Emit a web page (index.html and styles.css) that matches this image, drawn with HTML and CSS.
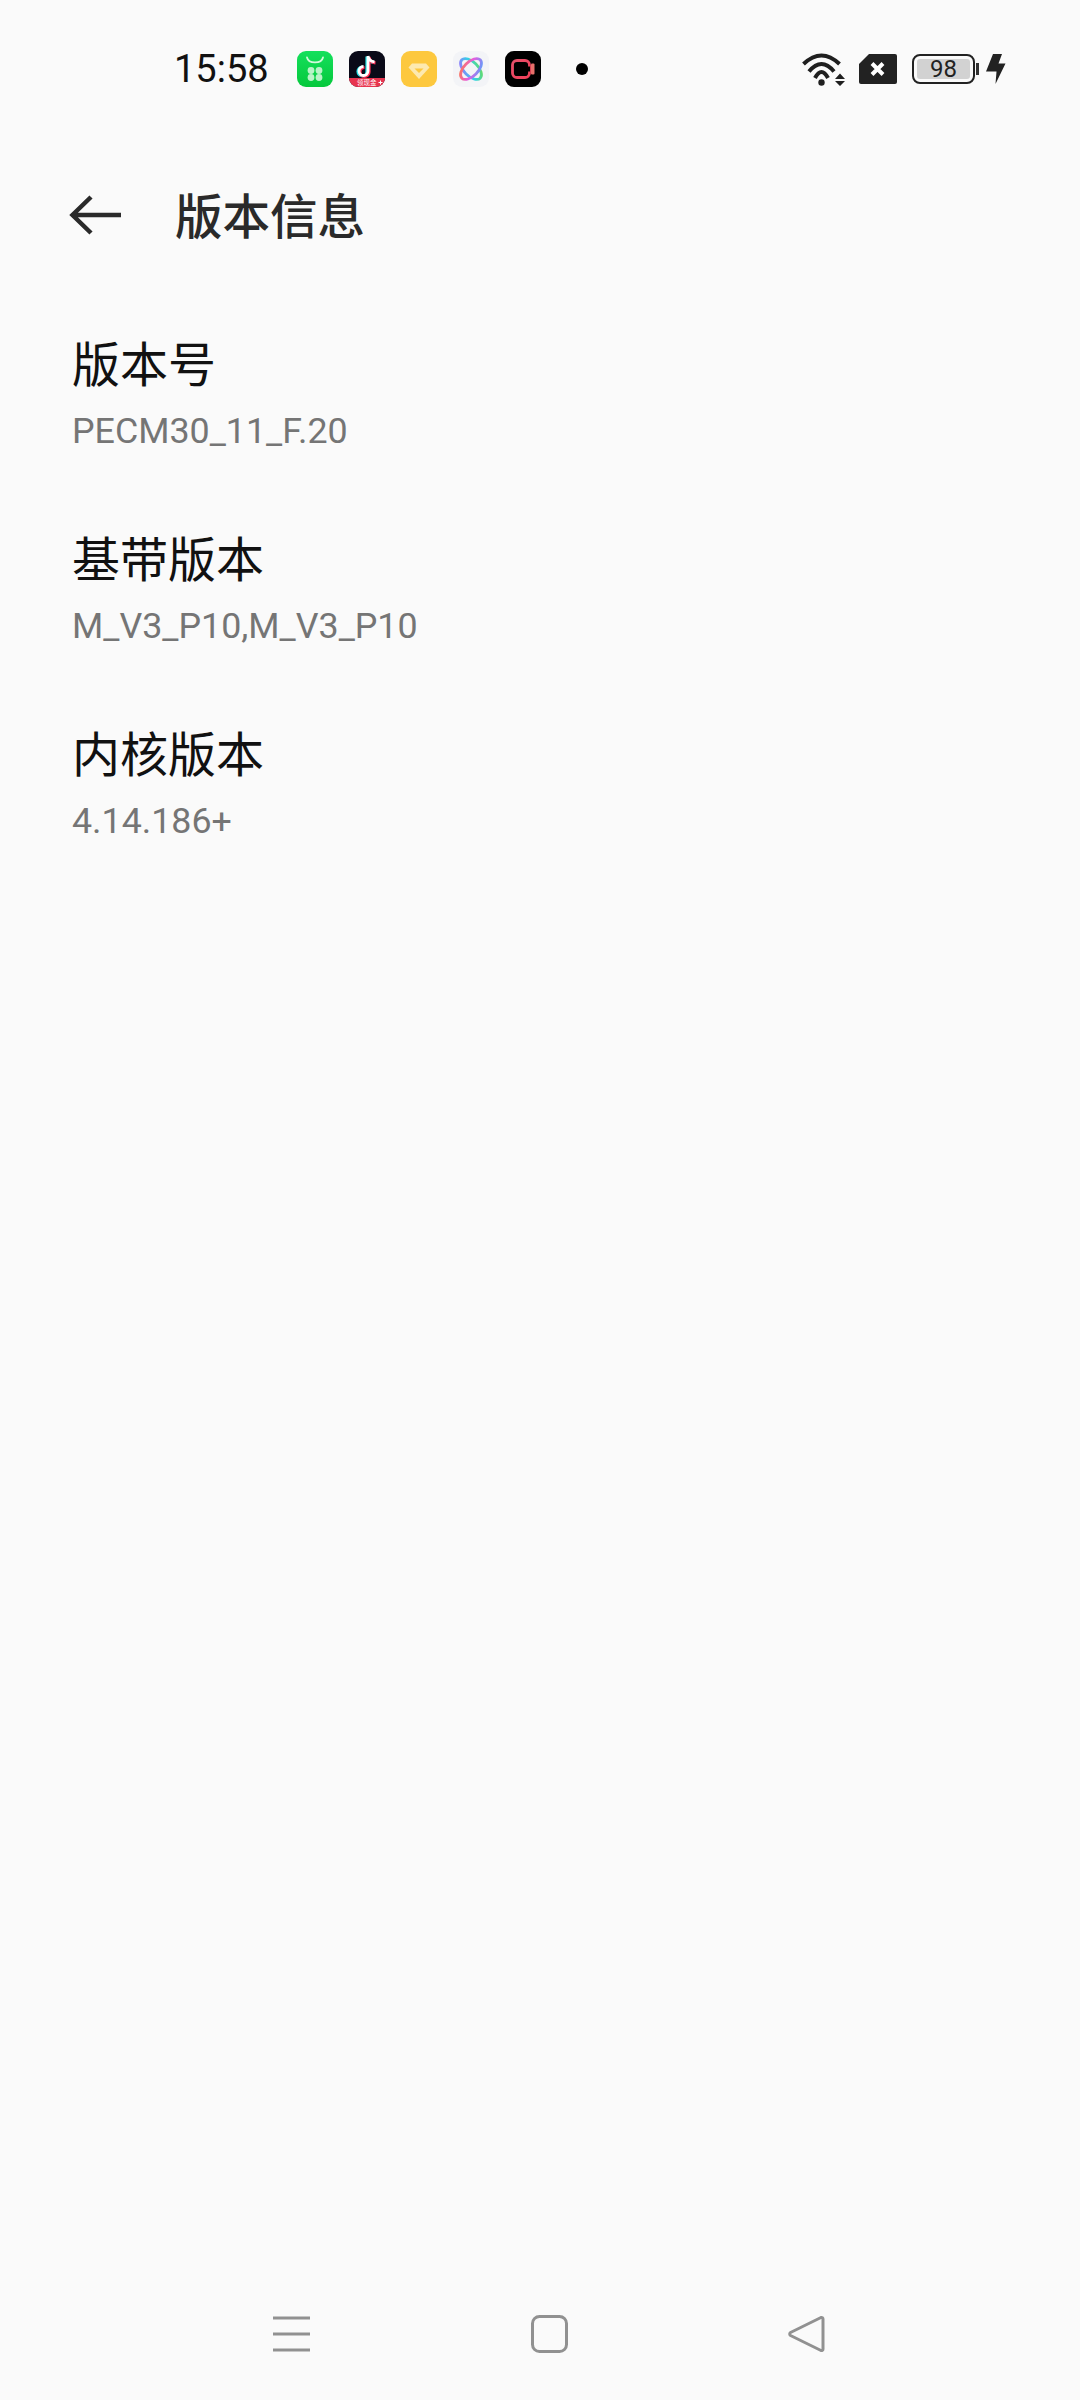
FILE: index.html
```html
<!DOCTYPE html>
<html>
<head>
    <title>版本信息</title>
    <meta charset="UTF-8">
    <meta name="viewport" content="width=device-width, initial-scale=1.0">
    <link rel="stylesheet" href="styles.css">
</head>
<body>
    <div class="status-bar">
        <span class="time">15:58</span>
        <div class="app-icons">
            <svg class="app-icon" viewBox="0 0 36 36">
                <defs>
                    <linearGradient id="storeGreen" x1="0" y1="0" x2="0" y2="1">
                        <stop offset="0" stop-color="#14e05c"/>
                        <stop offset="1" stop-color="#05c83c"/>
                    </linearGradient>
                </defs>
                <rect width="36" height="36" rx="9" fill="url(#storeGreen)"/>
                <path d="M10 6.500c1.500 6.500 14.500 6.500 16 0" fill="none" stroke="#d2f9dc" stroke-width="1.800" stroke-linecap="round"/>
                <circle cx="14" cy="19.500" r="3.400" fill="#b9f3c8"/>
                <circle cx="22" cy="19.500" r="3.400" fill="#b9f3c8"/>
                <circle cx="14" cy="26.500" r="3.400" fill="#b9f3c8"/>
                <circle cx="22" cy="26.500" r="3.400" fill="#b9f3c8"/>
            </svg>
            <svg class="app-icon" viewBox="0 0 36 36">
                <rect width="36" height="36" rx="9" fill="#0a0a18"/>
                <path d="M0 27h36a9 9 0 0 1-9 9H9a9 9 0 0 1-9-9z" fill="#e8344f"/>
                <path d="M19 5v15a4.500 4.500 0 1 1-4.500-4.500M19 5c.5 3.500 3 5.500 6.500 5.800" fill="none" stroke="#25e3e8" stroke-width="3.200" transform="translate(-1 .500)"/>
                <path d="M19 5v15a4.500 4.500 0 1 1-4.500-4.500M19 5c.5 3.500 3 5.500 6.500 5.800" fill="none" stroke="#ff2f55" stroke-width="3.200" transform="translate(1 1)"/>
                <path d="M19 5v15a4.500 4.500 0 1 1-4.500-4.500M19 5c.5 3.500 3 5.500 6.500 5.800" fill="none" stroke="#fff" stroke-width="2.800"/>
                <text x="8" y="34" class="badge-text">领现金</text>
                <path d="M31.500 29.500v4M29.500 31.500h4" stroke="#fff" stroke-width="1"/>
            </svg>
            <svg class="app-icon" viewBox="0 0 36 36">
                <rect width="36" height="36" rx="9" fill="#fdc83e"/>
                <path d="M7.500 16.500 11 12.500h14l3.500 4L18 28z" fill="#fde9b0"/>
                <path d="M13.500 17.500h9L18 22z" fill="#fdc83e"/>
            </svg>
            <svg class="app-icon" viewBox="0 0 36 36">
                <defs>
                    <linearGradient id="orbitA" x1="0" y1="0" x2="1" y2="1">
                        <stop offset="0" stop-color="#ff7a45"/>
                        <stop offset=".5" stop-color="#e55ce0"/>
                        <stop offset="1" stop-color="#4aa8ff"/>
                    </linearGradient>
                    <linearGradient id="orbitB" x1="1" y1="0" x2="0" y2="1">
                        <stop offset="0" stop-color="#6fdc50"/>
                        <stop offset=".5" stop-color="#2fd2e8"/>
                        <stop offset="1" stop-color="#a66cff"/>
                    </linearGradient>
                </defs>
                <rect width="36" height="36" rx="9" fill="#f3f4f7"/>
                <ellipse cx="18" cy="18" rx="13" ry="7" transform="rotate(45 18 18)" fill="none" stroke="url(#orbitB)" stroke-width="2.800"/>
                <ellipse cx="18" cy="18" rx="13" ry="7" transform="rotate(-45 18 18)" fill="none" stroke="url(#orbitA)" stroke-width="2.800"/>
            </svg>
            <svg class="app-icon" viewBox="0 0 36 36">
                <defs>
                    <linearGradient id="camRed" x1="0" y1="0" x2="1" y2="1">
                        <stop offset="0" stop-color="#e6506a"/>
                        <stop offset="1" stop-color="#f0405a"/>
                    </linearGradient>
                </defs>
                <rect width="36" height="36" rx="9" fill="#000"/>
                <rect x="7.500" y="9.500" width="17" height="17" rx="4.500" fill="none" stroke="url(#camRed)" stroke-width="2.800"/>
                <path d="M22 15.500h3v5h-3z" fill="#000"/>
                <rect x="26" y="12.500" width="3.500" height="11" rx="1" fill="#e8706a"/>
            </svg>
            <span class="dot"></span>
        </div>
        <div class="system-icons">
            <svg class="wifi" viewBox="0 0 43 33">
                <path d="M1.500 11Q19.500-6 37.500 11" fill="none" stroke="#1f1f1f" stroke-width="4"/>
                <path d="M7 18.500Q19.500 3.500 32 18.500" fill="none" stroke="#1f1f1f" stroke-width="4"/>
                <path d="M13 25Q19.500 13 26 25" fill="none" stroke="#1f1f1f" stroke-width="4"/>
                <circle cx="19.500" cy="29.500" r="3.200" fill="#1f1f1f"/>
                <path d="M33 26l5-5.500 5 5.500zM33 28h10l-5 5z" fill="#1f1f1f"/>
            </svg>
            <svg class="sim" viewBox="0 0 38 30">
                <path d="M10 0h26a2 2 0 0 1 2 2v26a2 2 0 0 1-2 2H2a2 2 0 0 1-2-2V10z" fill="#222"/>
                <path d="M13 9.500l11 11M24 9.500l-11 11" stroke="#fff" stroke-width="4"/>
            </svg>
            <div class="battery">
                <div class="battery-body"><span class="battery-level">98</span></div>
                <span class="battery-nub"></span>
            </div>
            <svg class="bolt" viewBox="0 0 20 30">
                <path d="M7 0h9l-3.500 9.500h7L9.500 30l1-12.500H0z" fill="#222"/>
            </svg>
        </div>
    </div>

    <div class="title-bar">
        <svg class="back" viewBox="0 0 52 40">
            <path d="M22 2 3.500 20 22 38M3.500 20H52" fill="none" stroke="#2a2a2a" stroke-width="4.500"/>
        </svg>
        <h1>版本信息</h1>
    </div>

    <div class="info-list">
        <div class="info-item">
            <div class="info-name">版本号</div>
            <div class="info-value">PECM30_11_F.20</div>
        </div>
        <div class="info-item">
            <div class="info-name">基带版本</div>
            <div class="info-value">M_V3_P10,M_V3_P10</div>
        </div>
        <div class="info-item">
            <div class="info-name">内核版本</div>
            <div class="info-value">4.14.186+</div>
        </div>
    </div>

    <div class="nav-bar">
        <svg class="nav-menu" viewBox="0 0 37 38">
            <path d="M0 3h37M0 19h37M0 35h37" stroke="#919191" stroke-width="3"/>
        </svg>
        <svg class="nav-home" viewBox="0 0 37 38">
            <rect x="1.500" y="1.500" width="34" height="35" rx="7" fill="none" stroke="#919191" stroke-width="3"/>
        </svg>
        <svg class="nav-back" viewBox="0 0 37 38">
            <path d="M33 2.500 2.500 17.500a1.800 1.800 0 0 0 0 3L33 35.500a1.500 1.500 0 0 0 2-1.500V4a1.500 1.500 0 0 0-2-1.500z" fill="none" stroke="#919191" stroke-width="3" stroke-linejoin="round"/>
        </svg>
    </div>
</body>
</html>
```

FILE: styles.css
```css
html, body {
    margin: 0;
    padding: 0;
}
body {
    width: 1080px;
    height: 2400px;
    background-color: #fafafa;
    font-family: Roboto, "Noto Sans CJK SC", sans-serif;
    display: flex;
    flex-direction: column;
    overflow: hidden;
}
.status-bar {
    display: flex;
    align-items: center;
    height: 36px;
    padding: 51px 74px 0 174px;
}
.time {
    width: 123px;
    font-size: 38px;
    color: #111;
}
.app-icons {
    display: flex;
    align-items: center;
    gap: 16px;
}
.app-icon {
    width: 36px;
    height: 36px;
}
.badge-text {
    font-size: 6.500px;
    font-family: "Noto Sans CJK SC", sans-serif;
    fill: #fff;
}
.dot {
    width: 12px;
    height: 12px;
    margin-left: 19px;
    border-radius: 50%;
    background-color: #000;
}
.system-icons {
    display: flex;
    align-items: center;
    margin-left: auto;
}
.wifi {
    width: 43px;
    height: 33px;
    margin-right: 14px;
}
.sim {
    width: 38px;
    height: 30px;
    margin-right: 15px;
}
.battery {
    display: flex;
    align-items: center;
    margin-right: 7px;
}
.battery-body {
    box-sizing: border-box;
    width: 63px;
    height: 30px;
    padding: 3px;
    border: 2px solid #222;
    border-radius: 8px;
}
.battery-level {
    display: block;
    height: 20px;
    line-height: 20px;
    text-align: center;
    font-size: 24px;
    color: #222;
    background-color: #d2d2d2;
    border-radius: 3px;
}
.battery-nub {
    width: 3px;
    height: 12px;
    margin-left: 1px;
    background-color: #333;
}
.bolt {
    width: 20px;
    height: 30px;
}
.title-bar {
    display: flex;
    align-items: center;
    height: 60px;
    margin-top: 98px;
    padding-left: 69px;
}
.back {
    width: 52px;
    height: 40px;
    margin-right: 54px;
}
h1 {
    margin: -4px 0 0;
    font-size: 47.500px;
    font-weight: 500;
    color: #2a2a2a;
}
.info-list {
    margin-top: 61px;
    padding-left: 72px;
}
.info-item {
    height: 195px;
    box-sizing: border-box;
    padding-top: 30px;
}
.info-name {
    font-size: 48px;
    line-height: 60px;
    color: #111;
}
.info-value {
    margin-top: 14px;
    font-size: 35.800px;
    line-height: 42px;
    color: #757575;
}
.nav-bar {
    display: flex;
    justify-content: space-between;
    margin-top: auto;
    padding: 0 255px 47px 273px;
}
.nav-menu, .nav-home, .nav-back {
    width: 37px;
    height: 38px;
}
```
